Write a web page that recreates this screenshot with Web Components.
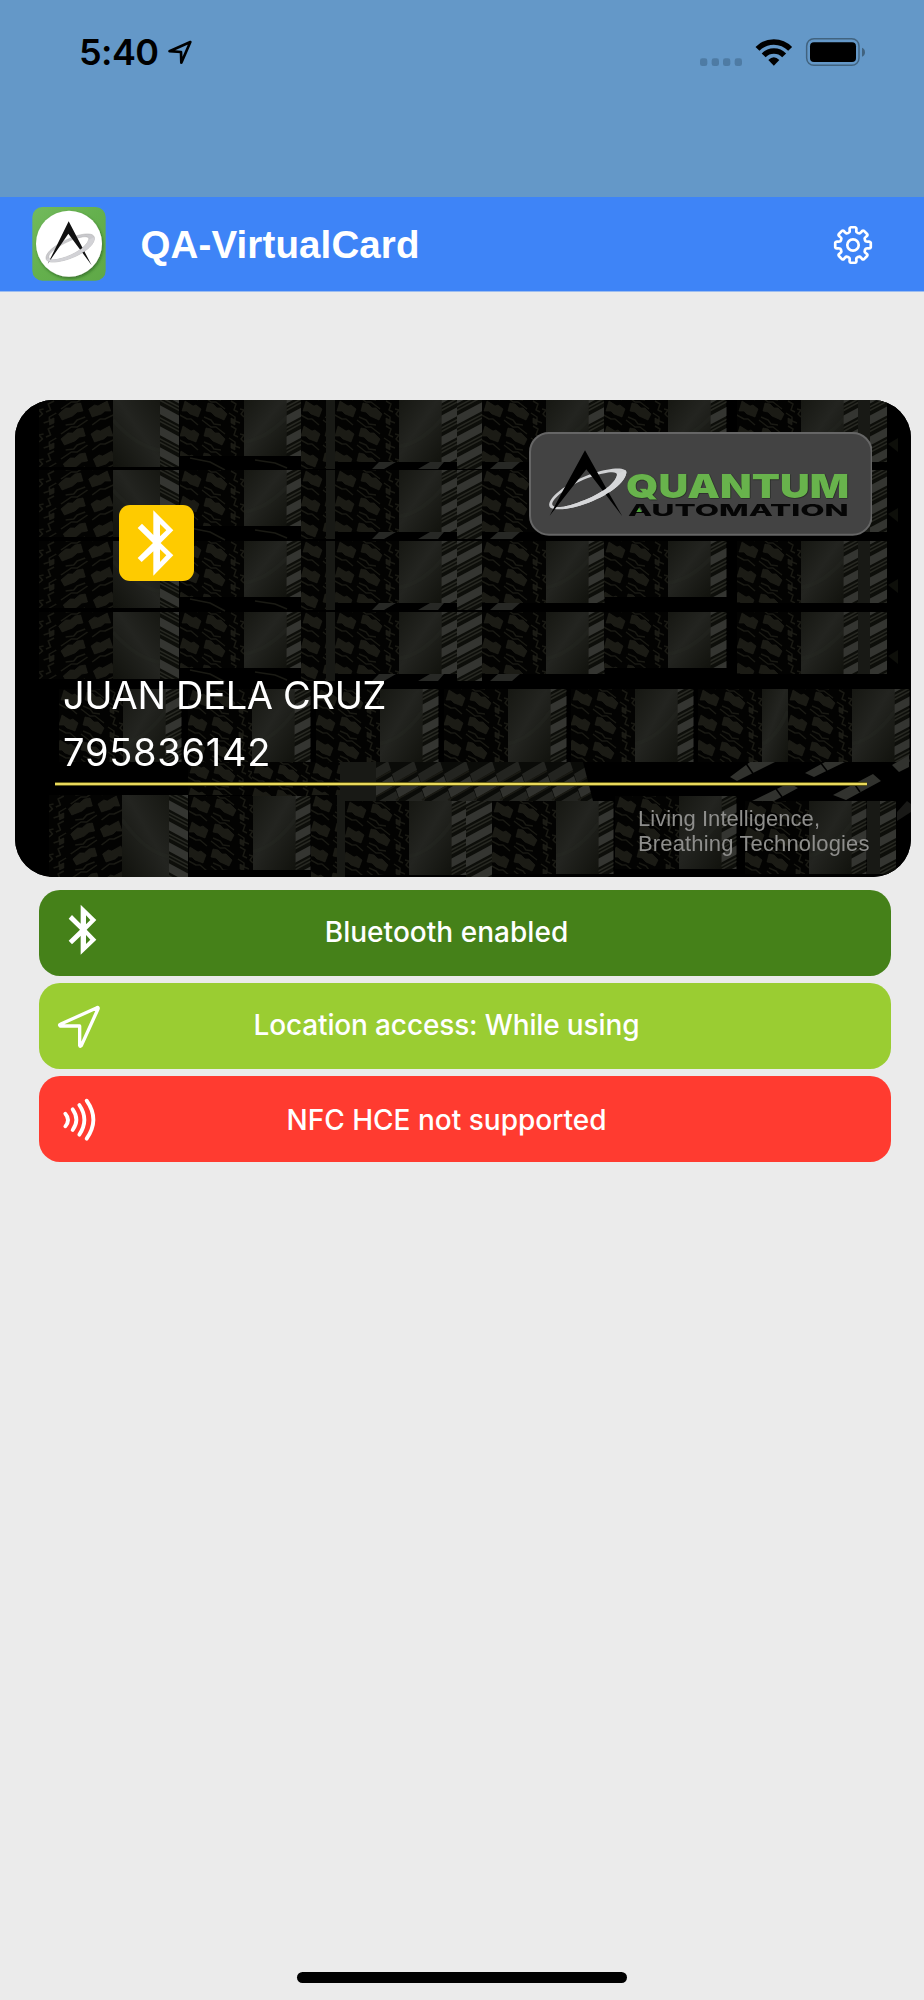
<!DOCTYPE html>
<html lang="en">
<head>
<meta charset="utf-8">
<title>QA-VirtualCard</title>
<style>
  html, body { margin: 0; height: 2000px; background: #ebebeb; overflow: hidden; }
</style>
</head>
<body>
<phone-screen>
  <status-bar slot="status"></status-bar>
  <app-header slot="header">QA-VirtualCard</app-header>
  <virtual-card holder="JUAN DELA CRUZ" number="795836142"></virtual-card>
  <status-list>
    <status-row tone="enabled" icon="bluetooth" span="243.5">Bluetooth enabled</status-row>
    <status-row tone="partial" icon="location" span="386">Location access: While using</status-row>
    <status-row tone="error" icon="nfc" span="320">NFC HCE not supported</status-row>
  </status-list>
</phone-screen>

<script>
class Base extends HTMLElement {
  constructor() {
    super();
    this.attachShadow({ mode: 'open' });
  }
  connectedCallback() {
    this.shadowRoot.innerHTML = this.render();
    this.ready();
  }
  ready() {}
}

customElements.define('phone-screen', class extends Base {
  render() {
    return `<style>
      :host { display: flex; flex-direction: column; width: 924px; height: 2000px; background: #ebebeb;
        font-family: Inter, "Noto Sans", sans-serif; }
      main { flex: 1; display: flex; flex-direction: column; padding: 108px 13px 0 15px; }
      footer { display: flex; justify-content: center; padding-bottom: 17.5px; }
      footer i { width: 330px; height: 11px; border-radius: 6px; background: #000; }
    </style>
    <slot name="status"></slot><slot name="header"></slot>
    <main><slot></slot></main>
    <footer><i></i></footer>`;
  }
});

/* Text whose tracking is tuned so that it takes a given width. */
customElements.define('tracked-text', class extends Base {
  render() {
    return `<style>:host { display: inline-block; white-space: nowrap; }</style><span><slot></slot></span>`;
  }
  ready() {
    const span = this.shadowRoot.querySelector('span');
    const n = this.textContent.length;
    const natural = span.getBoundingClientRect().width;
    const ls = (parseFloat(this.getAttribute('span')) - natural) / (n - 1);
    this.style.letterSpacing = ls.toFixed(3) + 'px';
    this.style.marginRight = (-ls).toFixed(3) + 'px';
  }
});

customElements.define('status-bar', class extends Base {
  render() {
    return `<style>
      :host { display: flex; justify-content: space-between; box-sizing: border-box; height: 197px;
        background: #6498c8; padding: 30px 58px 0 79px; }
      .time { display: flex; height: 45px; align-items: center; gap: 7px; color: #000; font-weight: 600; font-size: 36px; line-height: 45px; }
      svg { display: block; }
    </style>
    <div class="time"><tracked-text span="80">5:40</tracked-text>
      <svg width="28" height="45" viewBox="498 90 84 135"><path d="M571 126 508.500 153.500 543 156 544 188Z" fill="none" stroke="#000" stroke-width="8" stroke-linejoin="round"/></svg>
    </div>
    <svg width="169" height="45" viewBox="705 90 507 135">
      <g fill="#4e7ba4"><rect x="714" y="175" width="22" height="23" rx="7"/><rect x="749" y="175" width="22" height="23" rx="7"/><rect x="783" y="175" width="22" height="23" rx="7"/><rect x="818" y="175" width="22" height="23" rx="7"/></g>
      <g fill="none" stroke="#000" stroke-width="16.500">
        <path d="M886.500 146.500A68 68 0 0 1 984.500 146.500"/>
        <path d="M905 166A43 43 0 0 1 966.500 166"/>
      </g>
      <path d="M919 180Q935.500 163 952 180L935.500 197Z"/>
      <rect x="1034" y="116" width="157" height="80" rx="22" fill="none" stroke="#41637f" stroke-width="4.500"/>
      <rect x="1044" y="127" width="138" height="59" rx="12"/>
      <path d="M1200 143Q1209 147 1209 156.500T1200 170Z" fill="#41637f"/>
    </svg>`;
  }
});

customElements.define('app-header', class extends Base {
  gear() {
    const p = (r, a) => {
      const t = (a - 90) * Math.PI / 180;
      return (r * Math.cos(t)).toFixed(2) + ' ' + (r * Math.sin(t)).toFixed(2);
    };
    let d = '';
    for (let k = 0; k < 8; k++) {
      const a = k * 45;
      d += `${k ? 'L' : 'M'}${p(13.4, a - 15.5)}Q${p(14, a - 13)} ${p(15, a - 12.8)}L${p(16.6, a - 12)}Q${p(17.9, a - 11)} ${p(17.9, a - 7)}L${p(17.9, a + 7)}Q${p(17.9, a + 11)} ${p(16.6, a + 12)}L${p(15, a + 12.8)}Q${p(14, a + 13)} ${p(13.4, a + 15.5)}Q${p(12.6, a + 22.5)} ${p(13.4, a + 29.5)}`;
    }
    return d + 'Z';
  }
  render() {
    return `<style>
      :host { display: flex; align-items: center; box-sizing: border-box; height: 95px; padding: 0 51px 0 32px;
        background: #3e84f7; border-bottom: 1px solid #9cbdf0; color: #fff; }
      h1 { flex: 1; margin: 2px 0 0 34.500px; font: bold 38.500px/46px "Liberation Sans", Arial, sans-serif; }
      svg { display: block; }
    </style>
    <svg width="74" height="74" viewBox="97 622 222 222">
      <defs>
        <linearGradient id="g" x2="1" y2="1"><stop stop-color="#72ba5c"/><stop offset=".5" stop-color="#64b04d"/><stop offset="1" stop-color="#5fa847"/></linearGradient>
        <filter id="s" x="-20%" y="-20%" width="140%" height="140%"><feDropShadow dx="3" dy="5" stdDeviation="5" flood-color="#123c08" flood-opacity=".55"/></filter>
        <clipPath id="front"><path d="M120 800 138 780 285 712 310 740 300 800Z"/></clipPath>
      </defs>
      <rect x="98" y="622" width="220" height="221" rx="30" fill="url(#g)"/>
      <circle cx="208" cy="732" r="99" fill="#fff" filter="url(#s)"/>
      <path fill="#c9c9cd" stroke="#aaa" stroke-width="1.500" fill-rule="evenodd" d="M139 776C137 752 190 721 232 708C264 699 288 701 284 720C278 745 235 772 190 783C160 790 140 789 139 776ZM147 772C146 757 192 728 231 716C254 709 270 709 267 720C261 741 225 765 186 776C163 782 148 783 147 772Z"/>
      <path d="M207 665 276 797 206 702 144 793Z" fill="#111"/>
      <g clip-path="url(#front)"><path fill="#d2d2d6" fill-rule="evenodd" d="M139 776C137 752 190 721 232 708C264 699 288 701 284 720C278 745 235 772 190 783C160 790 140 789 139 776ZM147 772C146 757 192 728 231 716C254 709 270 709 267 720C261 741 225 765 186 776C163 782 148 783 147 772Z"/></g>
    </svg>
    <h1><tracked-text span="279"><slot></slot></tracked-text></h1>
    <svg width="40" height="40" viewBox="-20 -20 40 40" fill="none" stroke="#fff" stroke-width="2.700" stroke-linejoin="round" style="margin-top:2px"><path d="${this.gear()}"/><circle r="5.700"/></svg>`;
  }
  ready() {
    const t = this.shadowRoot.querySelector('tracked-text');
    t.textContent = this.textContent;
    t.style.letterSpacing = t.style.marginRight = '';
    t.ready();
  }
});

/* Backdrop of the card: rows of building facades, sky and bright slatted strips. */
customElements.define('card-art', class extends Base {
  facade() {
    let s = '';
    for (let r = -3; r < 6; r++) {
      const y = r * 25, o = -2 * r;
      s += `<path class="w" d="M${5 + o} ${y + 1}l8 5 3-1 5 4-3 8-8-3-3-3-5 0z"/>
        <path class="w" d="M${28 + o} ${y + 3}l5 1 4 4 4 0 6 6-3 6-9-4-4-4-5-1z"/>
        <path class="v" d="M-2 ${y + 14}l9 5 4 0 7 6M22 ${y - 5}l9 7 5 0 9 7M24 ${y + 17}l7 3 3 4 7 1"/>
        <path class="v" d="M51 ${y + 1}l5 3-2 6 4 2M60 ${y + 9}l4 1-3 4 3 3M49 ${y + 13}l6 4 0 4 5 2"/>
        <path class="w" d="M51 ${y + 18}l4 2 0 5-4-2z"/>`;
    }
    return s;
  }
  slats() {
    let s = '';
    for (let y = -14; y < 110; y += 21)
      s += `<path fill="#343531" d="M-1 ${y + 9}L29 ${y - 7}v9L-1 ${y + 18}z"/><path stroke="#272822" stroke-width="1.600" d="M-1 ${y + 21.5}L29 ${y + 5.500}M-1 ${y + 25}L29 ${y + 9}"/>`;
    return s;
  }
  block(kind, x, y, w, h, flip) {
    const k = flip && kind === 'facade' ? w / 64 : 1;
    const t = flip ? ` transform="translate(${w} 0) scale(${-k} 1)"` : '';
    const body = kind === 'sky'
      ? `<rect width="${w}" height="${h}" fill="url(#sky)"/><path d="M0 ${h * .75}Q${w * .5} ${h * .7} ${w} ${h * .3}" stroke="#292a26" stroke-width="4" opacity=".3" fill="none"/>`
      : kind === 'grey' ? `<rect width="${w}" height="${h}" fill="#181915"/>`
      : `<rect width="${w}" height="${h}" fill="${kind === 'slats' ? '#0d0e0a' : '#030302'}"/><use href="#${kind}"/>`;
    return `<svg x="${x}" y="${y}" width="${w}" height="${h}" overflow="hidden"><g${t}>${body}</g></svg>`;
  }
  render() {
    const b = (...a) => this.block(...a);
    const trio = (x, y, h, e = 16) => b('facade', x, y, 64, h) + b('sky', x + 64, y, 43, h) + b('slats', x + 106.5, y, e, h);
    let s = '';
    for (const y of [400, 470, 541, 612]) {
      s += b('facade', 39, y, 74, 67, 1) + b('sky', 113, y, 47, 67, 1) + b('slats', 160, y, 19, 67, 1);
      s += trio(180, y, 56, 15) + b('facade', 301, y, 27, 69) + b('grey', 326, y, 9, 69);
      s += trio(335, y, 62) + b('slats', 457, y, 25, 69) + trio(482, y, 62) + trio(604, y, 56);
      s += trio(737, y, 62, 15) + b('grey', 858, y, 12, 62) + b('slats', 870, y, 17, 62);
      s += `<path fill="#0e0f0a" d="M888 ${y + 44}l10-6v14z"/><path class="l" opacity=".8" d="M372 ${y + 69}l7-7h17l-12 7zM418 ${y + 69}l12-7h14l-6 7zM490 ${y + 69}l8-7h22l-8 7z"/>`;
      s += `<path class="v" d="M190 ${y + 58}l20 4 15 8M255 ${y + 60}l20 3 12 5"/>`;
    }
    s += trio(59, 689, 73) + trio(188, 689, 73) + trio(316, 689, 73) + trio(444, 689, 73) + trio(571, 689, 73);
    s += b('facade', 698, 689, 64, 73) + b('sky', 762, 689, 26, 73) + trio(788, 689, 73, 15);
    s += b('facade', 188, 762, 64, 33) + b('facade', 252, 762, 64, 35) + b('facade', 311, 762, 29, 39) + b('grey', 340, 762, 36, 39);
    let windows = '';
    for (let x = 340; x < 600; x += 26)
      for (let k = 0; k < 3; k++) windows += `<path class="l" opacity="${k === 1 ? 1 : .65}" d="M${x + k * 4} ${774 + k * 15}l22-13 3 9-22 13z"/><path class="v" d="M${x + k * 4} ${785 + k * 15}l25-14"/>`;
    s += `<svg x="376" y="762" width="222" height="39" viewBox="376 762 222 39"><rect x="376" y="762" width="222" height="39" fill="#0a0b08"/>${windows}<path fill="#000" d="M583 762h15v39h-5z"/></svg>`;
    s += `<path class="l" d="M730 777l20-15h25l-38 19zM752 801l37-18 9 5-24 13zM805 773l20-11h20l-31 15zM833 795l40-21 8 7-35 19zM892 765l17-10v12l-10 5z"/><path class="k" d="M745 762l9 13M774 786l8 11M820 762l7 9M853 782l7 10"/>`;
    s += b('facade', 49, 795, 73, 82, 1) + b('sky', 122, 795, 47, 82, 1) + b('slats', 169, 795, 19, 82, 1);
    s += trio(189, 796, 74, 15) + b('facade', 311, 795, 27, 82) + b('grey', 337, 795, 8, 82);
    s += trio(345, 801, 74) + b('slats', 466, 801, 26, 76) + trio(492, 801, 73, 15) + trio(615, 796, 73, 15);
    s += trio(745, 801, 73, 15) + b('grey', 867, 801, 13, 73) + b('slats', 880, 801, 16, 73) + `<path class="l" opacity=".5" d="M897 812l10-11 4 3v8l-14 9z"/>`;
    return `<style>
      :host { display: block; }
      svg { display: block; }
      .w { fill: #1b1b15; stroke: #21211b; stroke-width: .6; stroke-linejoin: round; }
      .v { fill: none; stroke: #1a1a14; stroke-width: 1.500; stroke-linejoin: round; }
      .l { fill: #31322e; } .k { stroke: #000; stroke-width: 1.500; }
    </style>
    <svg width="896" height="477" viewBox="15 400 896 477">
      <defs>
        <linearGradient id="sky" x1="0" y1="0" x2="1" y2="1"><stop stop-color="#161712"/><stop offset=".45" stop-color="#232420"/><stop offset="1" stop-color="#11120d"/></linearGradient>
        <g id="facade">${this.facade()}</g><g id="slats">${this.slats()}</g>
        <filter id="soft" color-interpolation-filters="sRGB"><feGaussianBlur stdDeviation=".55"/></filter>
      </defs>
      <rect x="15" y="400" width="897" height="478" fill="#000"/>
      <g filter="url(#soft)">${s}</g>
    </svg>`;
  }
});

customElements.define('quantum-logo', class extends Base {
  render() {
    const ring = 'M261 348C255 320 325 272 395 249C450 231 496 231 492 249C486 284 425 325 352 347C300 362 264 361 261 348ZM270 344C266 326 326 280 388 260C432 246 465 242 464 255C458 285 405 318 346 338C300 354 274 354 270 344Z';
    return `<style>
      :host { display: block; width: 343.500px; height: 103.500px; }
      svg { display: block; }
      text { font-family: Inter, "Liberation Sans", sans-serif; }
      .q { font-weight: 900; filter: drop-shadow(1.300px 1.300px 0 #0e120c); }
      .a { font-weight: 800; }
    </style>
    <svg width="343.500" height="103.500" viewBox="200 126 1030.500 310.500">
      <defs><clipPath id="front"><path d="M300 400 310 325 490 240 520 250 500 400Z"/></clipPath></defs>
      <rect x="203" y="129" width="1025" height="305" rx="57" fill="#434343" stroke="#666" stroke-width="6"/>
      <path d="${ring}" fill="#d0d1d3" fill-rule="evenodd"/>
      <path d="M368 181 440 310 480 379 372 238 262 377 300 305Z" fill="#000"/>
      <path d="${ring}" fill="#d6d7d9" fill-rule="evenodd" clip-path="url(#front)"/>
      <text class="q" x="491" y="324" font-size="100" textLength="669" lengthAdjust="spacingAndGlyphs" fill="#68b34c">QUANTUM</text>
      <text class="a" x="497" y="378" font-size="47" textLength="662" lengthAdjust="spacingAndGlyphs" fill="#050505">AUTOMATION</text>
      <path d="M530 353l9 13h-17z" fill="#4fa83a"/>
    </svg>`;
  }
});

customElements.define('virtual-card', class extends Base {
  render() {
    return `<style>
      :host { display: flex; flex-direction: column; position: relative; box-sizing: border-box; width: 896px; height: 477px;
        border-radius: 38px; overflow: hidden; color: #fff; background: #000; }
      card-art { position: absolute; inset: 0; }
      .top, .holder, hr, .tag { position: relative; }
      .top { display: flex; justify-content: space-between; align-items: flex-start; height: 267px; padding: 0 39px 0 104px; }
      quantum-logo { margin-top: 32px; }
      .tile { margin-top: 105px; width: 75.300px; height: 76px; border-radius: 11px; background: #fecb00; }
      .tile svg { display: block; }
      .holder { padding-left: 48px; font-size: 38px; line-height: 56.700px; height: 115px; }
      .holder div { height: 56.700px; }
      hr { box-sizing: border-box; width: 812px; height: 4px; margin: 0 0 0 40px; border: solid #5f5a18; border-width: 1px 0; background: #ead95c; }
      .tag { align-self: flex-end; width: 235px; margin: 20px 38px 0 0; font: 22px/25px "Liberation Sans", Arial, sans-serif; color: #8e8e8c; white-space: nowrap; }
    </style>
    <card-art></card-art>
    <div class="top">
      <div class="tile"><svg width="75.300" height="76" viewBox="357 346 226 228"><path fill="#fff" fill-rule="evenodd" d="M460 362 520 422 482 460 520 497 460 558V485L425 517 413 505 459 460 413 415 426 402 460 436ZM480 403V440L499 422ZM480 479V517L499 497Z"/></svg></div>
      <quantum-logo></quantum-logo>
    </div>
    <div class="holder"><div><tracked-text span="323.5">${this.getAttribute('holder')}</tracked-text></div><div><tracked-text span="207.500">${this.getAttribute('number')}</tracked-text></div></div>
    <hr>
    <div class="tag"><tracked-text span="182">Living Intelligence,</tracked-text><br><tracked-text span="231.5">Breathing Technologies</tracked-text></div>`;
  }
});

customElements.define('status-list', class extends Base {
  render() {
    return `<style>:host { display: flex; flex-direction: column; gap: 7px; padding: 13px 20px 0 24px; }</style><slot></slot>`;
  }
});

const ICONS = {
  bluetooth: `<svg width="78" height="86" viewBox="117 30 234 258"><path fill="#fff" fill-rule="evenodd" d="M242 74 289 120 260 149 289 179 242 224V168L216 193 206 182 240 149 206 116 216 105 242 131ZM258 106V133L271 120ZM258 165V192L271 179Z"/></svg>`,
  location: `<svg width="78" height="86" viewBox="117 309 234 258"><path fill="none" stroke="#fff" stroke-width="10" stroke-linejoin="round" d="M291 383Q296 381 294 387L244 497Q240 501 239 496V438H181Q176 435 181 433Z"/></svg>`,
  nfc: `<svg width="78" height="86" viewBox="117 588 234 258"><path fill="none" stroke="#fff" stroke-width="11.500" stroke-linecap="round" d="M196 701Q212 719 196 739M218 688Q240 719 218 750M238 675Q268 719 238 764M260 662Q300 719 260 776"/></svg>`
};

customElements.define('status-row', class extends Base {
  render() {
    return `<style>
      :host { display: flex; align-items: center; height: 86px; border-radius: 21px; color: #fff; font-size: 28px; font-weight: 450; line-height: 36px; }
      :host([tone=enabled]) { background: #458119; }
      :host([tone=partial]) { background: #9acd32; }
      :host([tone=error]) { background: #ff3b30; }
      :host([tone=error]) p { padding-top: 3px; }
      svg { display: block; }
      p { flex: 1; margin: 0 115px 2px 0; text-align: center; }
    </style>
    ${ICONS[this.getAttribute('icon')]}
    <p><tracked-text span="${this.getAttribute('span')}">${this.textContent}</tracked-text></p>`;
  }
});
</script>
</body>
</html>
